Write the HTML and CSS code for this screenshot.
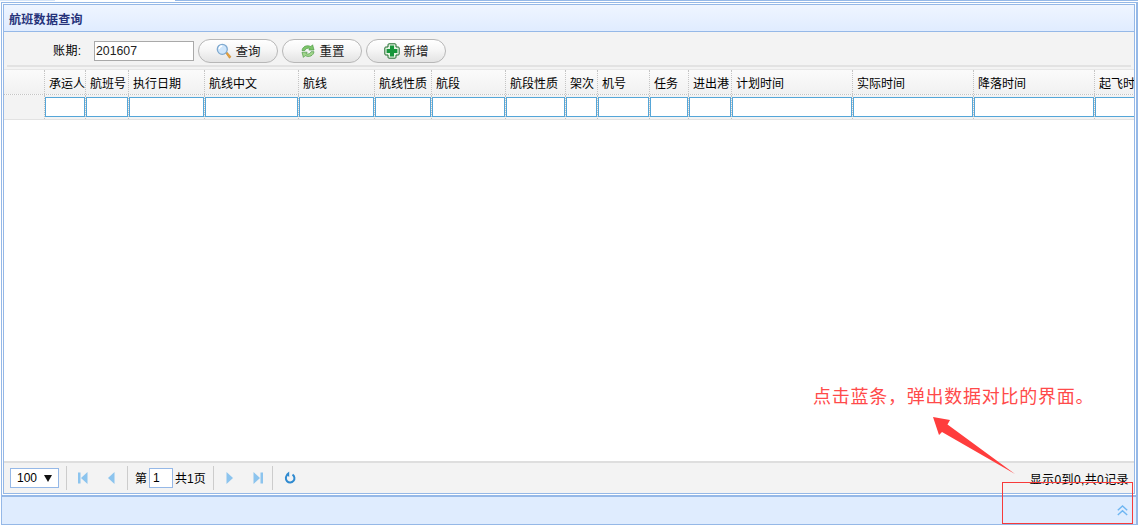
FILE: index.html
```html
<!DOCTYPE html>
<html lang="zh-CN">
<head>
<meta charset="utf-8">
<title>航班数据查询</title>
<link rel="stylesheet" href="styles.css">
</head>
<body>
<div class="tabstrip"><span class="seg-a"></span><span class="seg-b"></span><span class="seg-c"></span></div>
<div class="outer">
  <div class="panel">
    <div class="title">航班数据查询</div>
    <div class="toolbar">
      <div class="form">
        <label class="label">账期:</label>
        <input class="period" type="text" value="201607">
        <button class="btn" type="button">
          <svg class="ico" viewBox="0 0 16 16" width="16" height="16"><path d="M9.500 9.800l1.200-1 4.300 5-1.600 1.400z" fill="#e8a33c" stroke="#b9761c" stroke-width=".5"/><circle cx="6.300" cy="6.300" r="5" fill="#cfe6fb" stroke="#7fa9cf" stroke-width="1.300"/><path d="M3.200 6a3.200 3.200 0 0 1 3-3" fill="none" stroke="#fff" stroke-width="1.300"/></svg>
          查询</button>
        <button class="btn" type="button">
          <svg class="ico" viewBox="0 0 16 16" width="16" height="16"><path d="M2 7.500C2.500 3.500 7 1.500 10.800 3.600L12.600 1.800 14 7H8.800l1.200-1.400C7.800 4.600 5.600 5.400 4.900 7.500z" fill="#7fc66b" stroke="#4d9a45" stroke-width=".7"/><path d="M14 8.700c-.5 4-5 6-8.800 3.900L3.400 14.400 2 9.200h5.200L6 10.600c2.200 1 4.400.2 5.100-1.900z" fill="#a2d68d" stroke="#4d9a45" stroke-width=".7"/></svg>
          重置</button>
        <button class="btn" type="button">
          <svg class="ico" viewBox="0 0 16 16" width="16" height="16"><path d="M5 .8h6a1 1 0 0 1 1 1V4h2.200a1 1 0 0 1 1 1v6a1 1 0 0 1-1 1H12v2.200a1 1 0 0 1-1 1H5a1 1 0 0 1-1-1V12H1.800a1 1 0 0 1-1-1V5a1 1 0 0 1 1-1H4V1.800a1 1 0 0 1 1-1z" fill="#e4f3e2" stroke="#1e6b2c" stroke-width="1"/><path d="M6 2.600h4V6h3.400v4H10v3.400H6V10H2.600V6H6z" fill="#16963a"/></svg>
          新增</button>
      </div>
    </div>
    <div class="grid-wrap">
      <div class="grid head">
        <div class="cell"></div>
        <div class="cell">承运人</div><div class="cell">航班号</div><div class="cell">执行日期</div>
        <div class="cell">航线中文</div><div class="cell">航线</div><div class="cell">航线性质</div>
        <div class="cell">航段</div><div class="cell">航段性质</div><div class="cell">架次</div>
        <div class="cell">机号</div><div class="cell">任务</div><div class="cell">进出港</div>
        <div class="cell">计划时间</div><div class="cell">实际时间</div><div class="cell">降落时间</div>
        <div class="cell">起飞时间</div>
      </div>
      <div class="grid filter">
        <div class="fcell"></div>
        <div class="fcell"><input type="text"></div><div class="fcell"><input type="text"></div><div class="fcell"><input type="text"></div>
        <div class="fcell"><input type="text"></div><div class="fcell"><input type="text"></div><div class="fcell"><input type="text"></div>
        <div class="fcell"><input type="text"></div><div class="fcell"><input type="text"></div><div class="fcell"><input type="text"></div>
        <div class="fcell"><input type="text"></div><div class="fcell"><input type="text"></div><div class="fcell"><input type="text"></div>
        <div class="fcell"><input type="text"></div><div class="fcell"><input type="text"></div><div class="fcell"><input type="text"></div>
        <div class="fcell"><input type="text"></div>
      </div>
    </div>
    <div class="rows"></div>
    <div class="pager">
      <div class="select"><span>100</span><i class="caret"></i></div>
      <i class="sep sep-a"></i>
      <svg class="pg pg-first" viewBox="0 0 12 14" width="12" height="14"><path d="M1 1.500h2.500v11H1zM10.500 1v12L4 7z" fill="#8cc4ee"/></svg>
      <svg class="pg pg-prev" viewBox="0 0 8 14" width="8" height="14"><path d="M7.500 1v12L1 7z" fill="#8cc4ee"/></svg>
      <i class="sep sep-b"></i>
      <span class="pg-text">第</span>
      <input class="page" type="text" value="1">
      <span class="pg-text">共1页</span>
      <i class="sep sep-c"></i>
      <svg class="pg pg-next" viewBox="0 0 8 14" width="8" height="14"><path d="M.5 1v12L7 7z" fill="#8cc4ee"/></svg>
      <svg class="pg pg-last" viewBox="0 0 12 14" width="12" height="14"><path d="M1.500 1v12L8 7zM8.500 1.500H11v11H8.500z" fill="#8cc4ee"/></svg>
      <i class="sep sep-d"></i>
      <svg class="pg pg-reload" viewBox="0 0 12 14" width="12" height="14"><path d="M3.500 3.800a4.300 4.300 0 1 0 5-.2" fill="none" stroke="#2f8ad0" stroke-width="2"/><path d="M5.200 .6v5.400L2 3.300z" fill="#2f8ad0"/></svg>
      <span class="info">显示0到0,共0记录</span>
    </div>
  </div>
  <div class="bar">
    <svg class="up" viewBox="0 0 11 11" width="11" height="11"><path d="M.8 5.200L5.500 1l4.700 4.200M.8 10L5.500 5.800 10.200 10" fill="none" stroke="#6fb6f2" stroke-width="1.400"/></svg>
  </div>
</div>
<div class="note">点击蓝条，弹出数据对比的界面。</div>
<svg class="arrow" viewBox="0 0 90 65" width="90" height="65"><path d="M1 1L18 4L15.500 8.500L83 58L10 16L7 19z" fill="#ff3d3d"/></svg>
<div class="mark"></div>
</body>
</html>
```
FILE: styles.css
```css
* { box-sizing: border-box; }
html, body { margin: 0; padding: 0; }
body {
  width: 1138px;
  height: 527px;
  overflow: hidden;
  position: relative;
  background: #fff;
  font: 12px/14px "Liberation Sans", "Noto Sans CJK SC", sans-serif;
  color: #000;
}
.tabstrip { display: flex; height: 1px; }
.seg-a { width: 55px; background: #d5e4f8; }
.seg-b { width: 120px; background: #fff; }
.seg-c { flex: 1; background: #95b8e7; }

.outer {
  margin: 1px 0 0 1px;
  height: 523px;
  border: 1px solid #95b8e7;
  border-right-width: 2px;
  display: flex;
  flex-direction: column;
}
.panel {
  margin: 1px 1px 0 1px;
  height: 491px;
  border: 1px solid #95b8e7;
  display: flex;
  flex-direction: column;
  overflow: hidden;
}
.title {
  height: 27px;
  flex: none;
  padding: 8px 0 0 5px;
  border-bottom: 1px solid #95b8e7;
  background: linear-gradient(#eff5ff, #e0ecff);
  color: #26327a;
  font-weight: 700;
  font-size: 12px;
  letter-spacing: .3px;
}
.toolbar {
  height: 37px;
  flex: none;
  padding: 0 3px 0 3px;
  background: #f3f3f3;
}
.form {
  height: 35px;
  border-bottom: 2px solid #e2e2e2;
  display: flex;
  align-items: center;
  padding: 4px 0 0 46px;
}
.label { width: 41px; font-size: 12px; letter-spacing: .4px; }
.period {
  width: 100px;
  height: 20px;
  margin-right: 4px;
  padding: 0 1px;
  border: 1px solid #a9a9a9;
  background: #fff;
  font: 12.3px "Liberation Sans", sans-serif;
  color: #222;
  outline: 0;
}
.btn {
  width: 80px;
  height: 24px;
  margin-right: 4px;
  padding: 0 0 0 1px;
  border: 1px solid #b7b7b7;
  border-radius: 12px;
  background: linear-gradient(#fff, #f6f6f6 45%, #e3e3e3);
  display: flex;
  align-items: center;
  justify-content: center;
  gap: 3px;
  font: 12.5px "Liberation Sans", "Noto Sans CJK SC", sans-serif;
  color: #222;
}
.ico { flex: none; }

.grid-wrap { flex: none; width: 1130px; overflow: hidden; }
.grid {
  display: grid;
  grid-template-columns: 41px 41px 43px 76px 94px 76px 57px 74px 60px 32px 52px 39px 43px 121px 121px 121px 121px;
  width: 1251px;
}
.head {
  height: 26px;
  background: linear-gradient(#fbfbfb, #f1f1f1);
  border-top: 1px solid #e6e6e6;
  border-bottom: 1px dotted #c4c4c4;
}
.cell {
  padding: 7px 0 0 4px;
  border-right: 1px dotted #c4c4c4;
  white-space: nowrap;
  overflow: hidden;
  line-height: 14px;
}
.filter {
  height: 25px;
  background: #f3f3f3;
  border-bottom: 1px solid #e2e2e2;
}
.fcell {
  border-right: 1px dotted #c4c4c4;
  padding: 2px 0 0 0;
}
.fcell input {
  display: block;
  width: 100%;
  height: 20px;
  margin: 0;
  padding: 0;
  border: 1px solid #55a6d8;
  background: #fff;
  outline: 0;
}
.rows { flex: 1; background: #fff; }

.pager {
  flex: none;
  height: 32px;
  border-top: 2px solid #dedede;
  background: #f3f3f3;
  display: flex;
  align-items: center;
  padding-left: 6px;
  position: relative;
}
.select {
  width: 49px;
  height: 20px;
  border: 1px solid #95b8e7;
  background: #fff;
  display: flex;
  align-items: center;
  padding-left: 6px;
  font-size: 12px;
}
.caret {
  margin-left: 7px;
  border: 4px solid transparent;
  border-top: 7px solid #111;
  border-bottom: 0;
}
.sep { width: 1px; height: 24px; background: #ccc; flex: none; }
.sep-a { margin: 0 10px 0 7px; }
.sep-b { margin: 0 7px 0 12px; }
.sep-c { margin: 0 12px 0 7px; }
.sep-d { margin: 0 11px 0 8px; }
.pg { flex: none; }
.pg-first { margin-right: 18px; }
.pg-next { margin-right: 18px; }
.pg-text { font-size: 12px; padding-top: 1px; }
.page {
  width: 24px;
  height: 20px;
  margin: 0 2px;
  padding: 0 0 0 3px;
  border: 1px solid #95b8e7;
  background: #fff;
  font: 12px "Liberation Sans", sans-serif;
  outline: 0;
}
.info { position: absolute; right: 5px; top: 10px; font-size: 12px; letter-spacing: .4px; }

.bar {
  flex: none;
  height: 29px;
  margin-top: 1px;
  border-top: 2px solid #95b8e7;
  background: #dfecfe;
  display: flex;
  align-items: center;
  justify-content: flex-end;
  padding-right: 8px;
}
.note {
  position: absolute;
  left: 813px;
  top: 386px;
  font-size: 18px;
  line-height: 22px;
  letter-spacing: .75px;
  color: #ff4a4a;
  white-space: nowrap;
}
.arrow { position: absolute; left: 932px; top: 416px; }
.mark {
  position: absolute;
  left: 1002px;
  top: 482px;
  width: 131px;
  height: 42px;
  border: 1px solid #f73a3a;
}
```
